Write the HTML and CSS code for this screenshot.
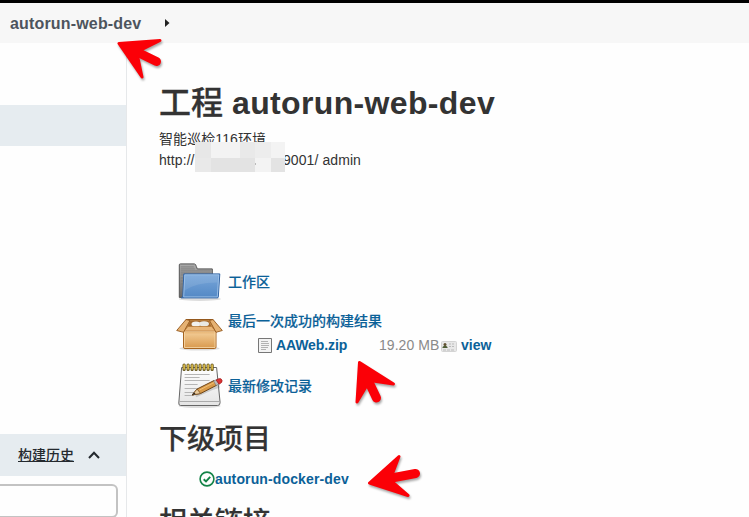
FILE: index.html
```html
<!DOCTYPE html>
<html lang="zh-CN">
<head>
<meta charset="utf-8">
<title>autorun-web-dev</title>
<link rel="stylesheet" href="styles.css">
</head>
<body>
<header class="breadcrumbs">
  <span class="crumb">autorun-web-dev</span>
  <svg class="crumb-arrow" width="5" height="8" viewBox="0 0 5 8"><path d="M0 0L4.5 4L0 8Z" fill="#222"/></svg>
</header>
<div class="page">
  <aside class="side">
    <div class="side-active"></div>
    <div class="history">
      <span class="history-title">构建历史</span>
      <svg width="12" height="8" viewBox="0 0 12 8"><path d="M1 7L6 1.7L11 7" fill="none" stroke="#24292e" stroke-width="2"/></svg>
    </div>
    <div class="history-search"></div>
  </aside>
  <main class="main">
    <h1 class="title"><span class="cjk">工程</span> <span>autorun-web-dev</span></h1>
    <div class="desc">
      <div class="cjk">智能巡检116环境</div>
      <div class="url"><span>http://</span><span class="url-end">9001/ admin</span></div>
      <svg class="mosaic" width="90" height="30" viewBox="0 0 90 30" shape-rendering="crispEdges">
        <path fill="#ededed" d="M0 0H90V30H0Z"/><path fill="#e7e7e7" d="M0 0H16V16H0ZM66 16H76V30H66Z"/><path fill="#f3f3f3" d="M16 0H45V16H16ZM60 16H76V30H60ZM76 0H90V16H76Z"/><path fill="#e3e3e3" d="M16 16H60V30H16ZM76 16H90V30H76Z"/><path fill="#e9e9e9" d="M0 16H16V30H0ZM45 0H60V16H45Z"/><path fill="#bbb" d="M60 21H61V23H60Z"/>
      </svg>
    </div>
    <section class="links">
      <div class="row row-workspace">
        <svg width="48" height="40" viewBox="0 0 48 40">
          <defs>
            <linearGradient id="fb" x1="0" y1="0" x2="0" y2="1"><stop offset="0" stop-color="#aaa"/><stop offset="1" stop-color="#696969"/></linearGradient>
            <linearGradient id="ff" x1="0" y1="0" x2="0" y2="1"><stop offset="0" stop-color="#79a7da"/><stop offset="1" stop-color="#5388c5"/></linearGradient>
          </defs>
          <g transform="translate(.8 .4)">
          <ellipse cx="24" cy="36.5" rx="21" ry="2" fill="#ddd"/>
          <path d="M3.5 35V2.5Q3.500 1.500 4.500 1.500H18.500Q20 1.500 20.500 4L21.500 6.500H36.500V35Z" fill="url(#fb)" stroke="#555"/>
          <path d="M5 4.500H18M5 6.500H19M5 8.500H35M5 10.500H35M5 12.500H8M5 15.500H8M5 18.500H8M5 21.500H8" stroke="#777" stroke-width=".7"/>
          <path d="M8 11.500H44L42.500 34.500Q42.400 35.500 41.500 35.500H5.500Q7 35 7 33Z" fill="url(#ff)" stroke="#3465a4"/>
          <path d="M9 12.500H42.900L41.500 34.500H7.900Z" fill="none" stroke="#a5c6eb" stroke-width=".8"/>
          <path d="M9.500 13H42L41.500 20Q20 20 8.800 28Z" fill="#fff" opacity=".1"/>
          </g>
        </svg>
        <a class="cjk">工作区</a>
      </div>
      <div class="row row-artifacts">
        <svg width="48" height="40" viewBox="0 0 48 40">
          <defs><linearGradient id="bx" x1="0" y1="0" x2="0" y2="1"><stop offset="0" stop-color="#e2a860"/><stop offset=".3" stop-color="#efc58c"/><stop offset="1" stop-color="#d8984c"/></linearGradient></defs>
          <ellipse cx="24.500" cy="34.500" rx="20" ry="2" fill="#ddd"/>
          <path d="M11 5.500H38L41 15H8Z" fill="#c98f4c" stroke="#94581d"/>
          <path d="M15.500 6.500H33.500L37 14H12Z" fill="#a46a2e"/>
          <ellipse cx="21" cy="10" rx="4.500" ry="2.600" fill="#f2f2ee"/><ellipse cx="29" cy="9.800" rx="5" ry="2.600" fill="#e9e9e4"/>
          <path d="M8.500 14.500H41V33Q41 34.500 39.500 34.500H10Q8.500 34.500 8.500 33Z" fill="url(#bx)" stroke="#a86520"/>
          <path d="M9.500 17.500H40V33.500H9.500Z" fill="none" stroke="#f6d8aa" stroke-width=".8"/>
          <path d="M13 12.500H36.500L40.500 17H9Z" fill="#e8b679" stroke="#b57733" stroke-width=".6"/>
          <path d="M11 5.500L15 6.500L8.500 18.300L1.700 16.500Z" fill="#e6b273" stroke="#94581d" stroke-width=".9"/>
          <path d="M38 5.500L34.500 6.500L41 18.300L47.300 16.500Z" fill="#e6b273" stroke="#94581d" stroke-width=".9"/>
        </svg>
        <div class="artifact-body">
          <a class="cjk">最后一次成功的构建结果</a>
          <div class="file">
            <svg class="file-icon" width="14" height="15" viewBox="0 0 14 15"><path d="M.5.5H13.500V14.500H.5Z" fill="#f3f3f3" stroke="#777"/><path d="M3 3.500H10M3 5.500H11M3 7.500H11M3 9.500H10M3 11.500H8" stroke="#aaa" stroke-width=".9"/></svg>
            <a class="file-name">AAWeb.zip</a>
            <span class="size">19.20 MB</span>
            <svg class="card-icon" width="16" height="11" viewBox="0 0 16 11"><rect x=".5" y=".5" width="15" height="10" rx="1" fill="#e8e8e8" stroke="#d4d4d4"/><circle cx="4" cy="3.500" r="1.500" fill="#60502f"/><path d="M1.500 7V6Q4 3.500 6.500 6V7Z" fill="#4e5d35"/><path d="M8 3H13M8 5.500H13" stroke="#bbb" stroke-dasharray="2 1"/><path d="M2 9H13" stroke="#bbb" stroke-dasharray="3 1"/></svg>
            <a class="view">view</a>
          </div>
        </div>
      </div>
      <div class="row row-changes">
        <svg width="48" height="46" viewBox="0 0 48 46">
          <defs><linearGradient id="np" x1="0" y1="0" x2="0" y2="1"><stop offset="0" stop-color="#fff"/><stop offset="1" stop-color="#e4e4e4"/></linearGradient></defs>
          <g transform="translate(.6 0)">
          <ellipse cx="24" cy="43" rx="21" ry="2" fill="#ddd"/>
          <path d="M6 4.500H41L44.500 39.500Q44.600 42.500 42 42.500H5Q3 42.500 3.200 40Z" fill="url(#np)" stroke="#666"/>
          <path d="M3.500 38.500H44" stroke="#aaa"/>
          <path d="M9 11.500H34M9 14.500H24M9 17.500H34M9 21.500H22M9 25.500H31M9 29.500H22M9 32.500H18" stroke="#b5b5b5"/>
          <path d="M8.500 2V6.500M12.500 2V6.500M16.500 2V6.500M20.500 2V6.500M24.500 2V6.500M28.500 2V6.500M32.500 2V6.500M36.500 2V6.500" stroke="#65551c" stroke-width="3.200" stroke-linecap="round"/>
          <path d="M8.500 2V6M12.500 2V6M16.500 2V6M20.500 2V6M24.500 2V6M28.500 2V6M32.500 2V6M36.500 2V6" stroke="#e0c04c" stroke-width="1.600" stroke-linecap="round"/>
          <path d="M20 33L38 25L44 23" fill="none" stroke="#888" opacity=".35" stroke-width="3"/>
          <path d="M16.500 32L21.500 26L38.500 17.500L41.500 22L25 30.500Z" fill="#d99a48" stroke="#6e4518"/>
          <path d="M24 27L39.500 19" stroke="#f0bf75"/>
          <path d="M16.500 32L21.500 26L25 30.500Z" fill="#e9cb9d" stroke="#6e4518" stroke-width=".7"/><path d="M16.500 32L18.500 29.500L20 31Z" fill="#222"/>
          <path d="M38 18L41 16.500L43.500 21L40.500 22.500Z" fill="#bbb" stroke="#777" stroke-width=".6"/>
          <path d="M40.500 17L43 15.800Q46 15 46.500 17.500Q47 19.500 43.500 21.200Z" fill="#db3434" stroke="#a01919" stroke-width=".7"/>
          </g>
        </svg>
        <a class="cjk">最新修改记录</a>
      </div>
    </section>
    <h2 class="cjk sub">下级项目</h2>
    <div class="downstream">
      <svg width="16" height="16" viewBox="0 0 16 16" fill="none" stroke="#138347" stroke-width="1.600"><circle cx="8" cy="8" r="6.900"/><path d="M4.700 8.200L7 10.400L11.200 5.900" stroke-width="1.900"/></svg>
      <a>autorun-docker-dev</a>
    </div>
    <h2 class="cjk related">相关链接</h2>
  </main>
</div>
<svg class="pointers" width="749" height="517" viewBox="0 0 749 517" fill="#fb0007" stroke="#fb0007" stroke-linejoin="round" stroke-linecap="round">
  <path stroke-width="3" d="M119 43.500L160 40.500L141 50L138 58L142 77Z"/>
  <path stroke-width="9" d="M134 50.500L156.500 61.500"/>
  <path stroke-width="3" d="M359.500 362.500L393.500 384L373 381L366.500 386L357 402Z"/>
  <path stroke-width="9" d="M367.500 379L376.500 398"/>
  <path stroke-width="3" d="M369.500 483L399 456.500L392 475L393 482.500L408 495.500Z"/>
  <path stroke-width="9" d="M389 478.500L415.500 473.500"/>
</svg>
</body>
</html>
```
FILE: styles.css
```css
* { box-sizing: border-box; }
body {
  margin: 0;
  width: 749px;
  height: 517px;
  overflow: hidden;
  background: #fefefe;
  color: #333;
  font: 14px/20px "Liberation Sans", "Noto Sans CJK SC", sans-serif;
}
svg { display: block; flex: none; }
.cjk { font-family: "Liberation Sans", "Noto Sans CJK SC", sans-serif; }
.breadcrumbs {
  display: flex;
  align-items: center;
  height: 43px;
  padding: 3px 10px 0;
  border-top: 3px solid #000;
  background: #f7f7f7;
}
.crumb {
  width: 155px;
  margin-top: -2px;
  color: #4d545d;
  font-size: 16px;
  font-weight: 700;
  letter-spacing: .17px;
}
.crumb-arrow { margin-top: -3px; }
.page { display: flex; height: 474px; }
.side {
  width: 127px;
  padding-top: 62px;
  border-right: 1px solid #e6e8ea;
}
.side-active { height: 41px; background: #e6ecf0; }
.history {
  display: flex;
  align-items: center;
  gap: 14px;
  height: 42px;
  margin-top: 288px;
  padding-left: 18px;
  background: #e6ecf0;
}
.history-title {
  color: #24292e;
  font-weight: 500;
  text-decoration: underline;
}
.history-search {
  width: 118px;
  height: 34px;
  margin-top: 8px;
  border: 2px solid #c3c3c3;
  border-left: 0;
  border-radius: 0 6px 6px 0;
}
.main { flex: 1; padding: 40px 0 0 32px; white-space: nowrap; }
.title {
  display: flex;
  gap: 9px;
  height: 40px;
  margin: 0;
  font-size: 32px;
  line-height: 40px;
  letter-spacing: .35px;
}
.title .cjk { font-weight: 500; letter-spacing: 0; -webkit-text-stroke: .3px; }
.desc { position: relative; padding-top: 6px; line-height: 21px; height: 90px; letter-spacing: .08px; }
.url { display: flex; }
.url span:first-child { width: 124px; }
.mosaic { position: absolute; left: 36px; top: 19px; }
.links a, .downstream a {
  color: #0b6198;
  font-weight: 700;
}
.links a.cjk { font-weight: 500; -webkit-text-stroke: .15px; }
.row { display: flex; gap: 5px; padding-left: 16px; }
.row > svg { flex: none; }
.row-workspace { align-items: center; height: 40px; margin-top: 49px; }
.row-artifacts { height: 48px; margin-top: 9px; }
.row-artifacts > svg { margin-top: 3px; }
.file { display: flex; align-items: center; height: 24px; margin-top: 2px; padding-left: 30px; }
.links .file-name { width: 103px; margin-left: 4px; letter-spacing: -.1px; }
.size { width: 62px; color: #8a8a8a; letter-spacing: .05px; }
.card-icon { margin-top: 2px; }
.links .view { margin-left: 4px; }
.row-changes { align-items: center; height: 46px; margin-top: 4px; }
h2 { margin: 0; font-size: 28px; line-height: 36px; font-weight: 500; -webkit-text-stroke: .2px; }
.sub { margin-top: 13px; }
.downstream { display: flex; align-items: center; height: 20px; margin: 11px 0 0 40px; letter-spacing: .13px; }
.related { margin-top: 16px; }
.pointers { position: absolute; left: 0; top: 0; filter: drop-shadow(1px 2px 1px rgba(0, 0, 0, .35)); }
```
